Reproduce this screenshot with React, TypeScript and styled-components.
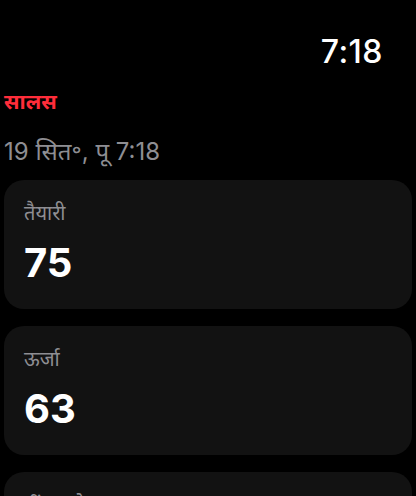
import React from 'react';
import styled, { createGlobalStyle } from 'styled-components';


const GlobalStyle = createGlobalStyle`
  html, body {
    margin: 0;
    padding: 0;
    background: #000;
  }
  body {
    font-family: Inter, "Noto Sans Devanagari", "Noto Sans", sans-serif;
    color: #fff;
  }
`;

const Screen = styled.div`
  width: 416px;
  height: 496px;
  overflow: hidden;
  background: #000;
  padding: 0 4px;
  box-sizing: border-box;
  display: flex;
  flex-direction: column;

  & > * {
    flex-shrink: 0;
  }
`;

const StatusBar = styled.div`
  display: flex;
  justify-content: flex-end;
  padding: 31px 29px 0 0;
  height: 88px;
  box-sizing: border-box;
`;

const Clock = styled.span`
  font-size: 32px;
  font-weight: 500;
  letter-spacing: 0.5px;
  line-height: 42px;
`;

const Title = styled.div`
  color: #ff2d3a;
  font-size: 21px;
  font-weight: 700;
  line-height: 28px;
`;

const Timestamp = styled.div`
  color: #8e8e93;
  font-size: 24px;
  line-height: 30px;
  margin-top: 21px;
`;

const CardList = styled.div`
  display: flex;
  flex-direction: column;
  gap: 17px;
  margin-top: 13px;
`;

const Card = styled.div`
  background: #121212;
  border-radius: 20px;
  height: 129px;
  padding: 19px 20px 0;
  box-sizing: border-box;
  flex-shrink: 0;
`;

const CardLabel = styled.div`
  color: #8e8e93;
  font-size: 20px;
  line-height: 28px;
`;

const CardValue = styled.div`
  font-size: 40px;
  font-weight: 700;
  line-height: 50px;
  margin-top: 11px;
`;

const metrics = [
  { label: 'तैयारी', value: 75 },
  { label: 'ऊर्जा', value: 63 },
  { label: 'नींद स्कोर', value: 80 },
];


const App = () => (
  <>
    <GlobalStyle />
    <Screen>
      <StatusBar>
        <Clock>7:18</Clock>
      </StatusBar>
      <Title>सालस</Title>
      <Timestamp>19 सित॰, पू 7:18</Timestamp>
      <CardList>
        { metrics.map(m => (
          <Card key={ m.label }>
            <CardLabel>{ m.label }</CardLabel>
            <CardValue>{ m.value }</CardValue>
          </Card>
        )) }
      </CardList>
    </Screen>
  </>
);


export default App;
